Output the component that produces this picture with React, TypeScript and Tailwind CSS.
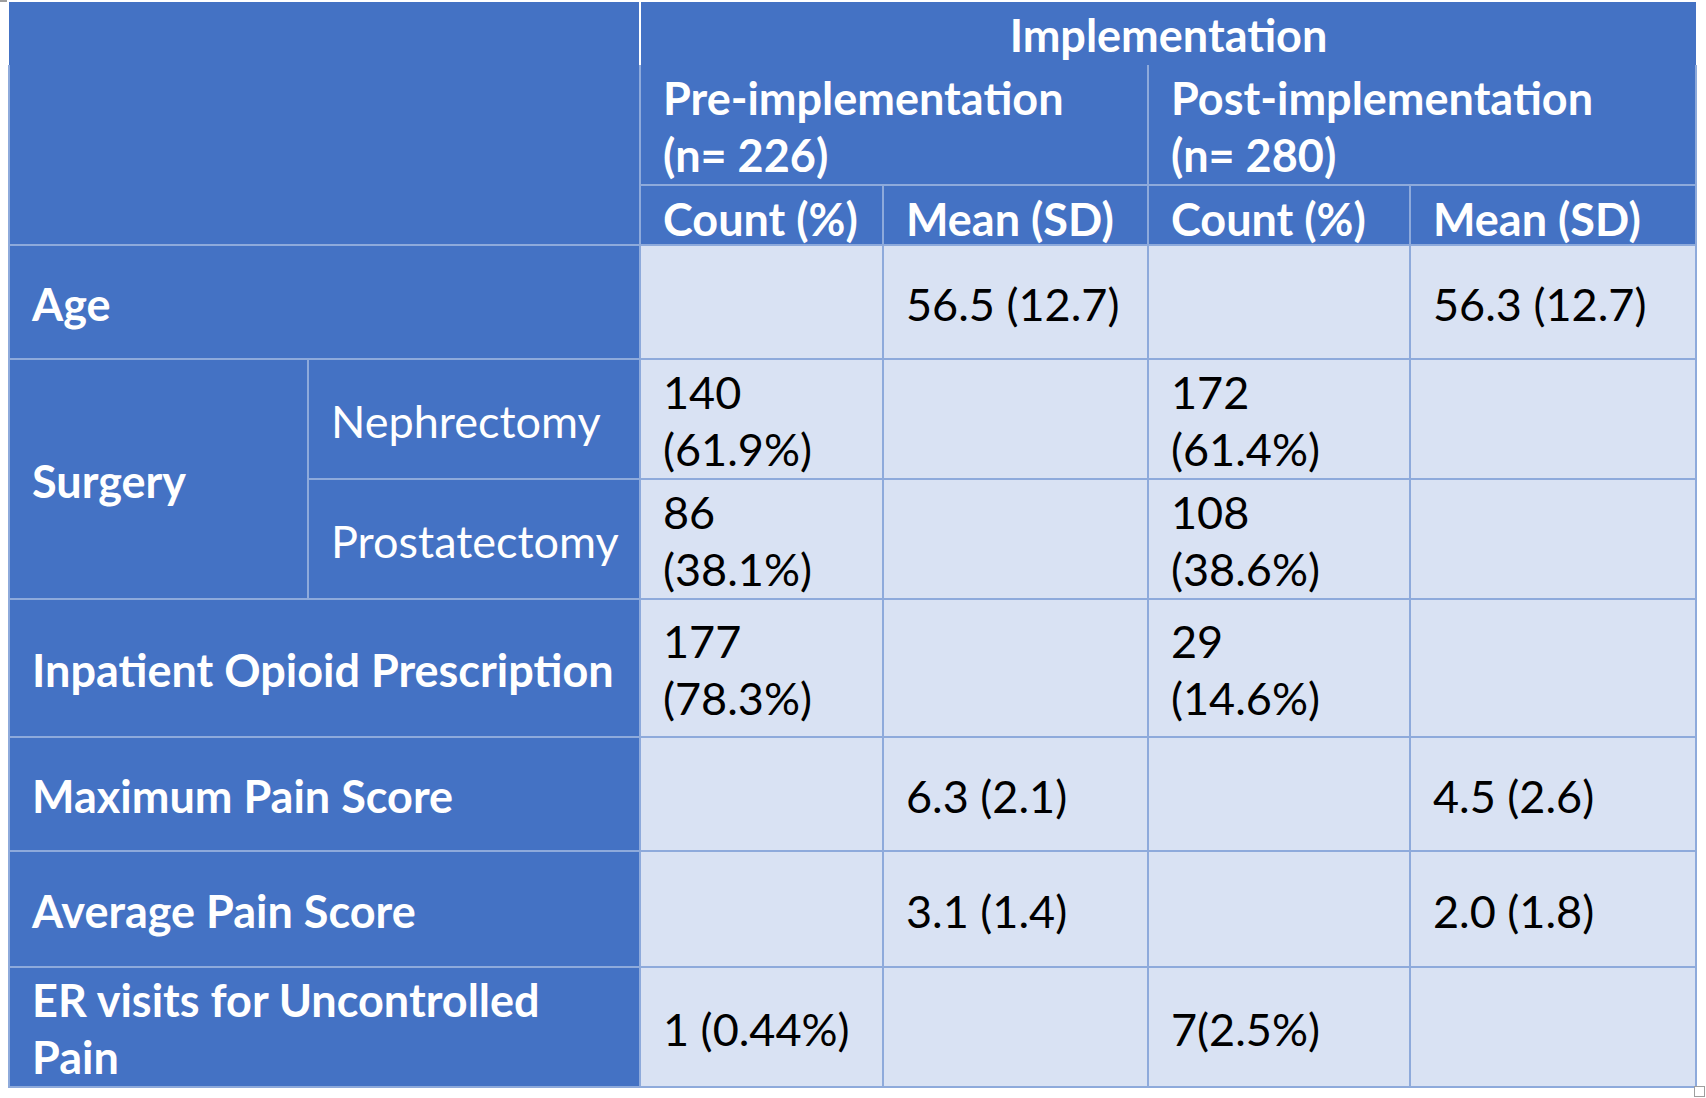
import React from "react";

const line = "border-2 border-[#8eaadb]";
const head = "bg-[#4472c4] text-white font-bold";
const label = "bg-[#4472c4] text-white font-bold";
const data = "bg-[#d9e2f3] text-black";
const pad = "px-[22px] pt-[4px] pb-0 align-middle";
const sub = "px-[22px] pt-[8px] pb-0 leading-[48px] align-middle whitespace-nowrap";

const rows = [
  { name: "Maximum Pain Score", h: "h-[114px]", c1: "", m1: "6.3 (2.1)", c2: "", m2: "4.5 (2.6)" },
  { name: "Average Pain Score", h: "h-[116px]", c1: "", m1: "3.1 (1.4)", c2: "", m2: "2.0 (1.8)" },
];

const Data = ({ children }: { children?: React.ReactNode }) => (
  <td className={`${line} ${data} ${pad}`}>{children}</td>
);

export default function App() {
  return (
    <div className="relative bg-white w-[1706px] h-[1098px] pl-[8px] pt-[2px] text-[45px] leading-[57px] font-['Lato','Noto_Sans',sans-serif]">
      <div className="absolute left-0 top-0 w-[7px] h-[2px] bg-[#9e9e9e]" />
      <table className="table-fixed border-collapse w-[1687px]">
        <colgroup>
          <col className="w-[299px]" />
          <col className="w-[332px]" />
          <col className="w-[243px]" />
          <col className="w-[265px]" />
          <col className="w-[262px]" />
          <col className="w-[286px]" />
        </colgroup>
        <tbody>
          <tr className="h-[63px]">
            <td colSpan={2} className={`${head} border-0 border-r-2 border-r-white`} />
            <td colSpan={4} className={`${head} border-0 text-center align-middle pt-[4px]`}>
              Implementation
            </td>
          </tr>
          <tr className="h-[120px]">
            <td colSpan={2} rowSpan={2} className={`${head} border-0 border-l-2 border-l-[#8eaadb] border-r-2 border-r-[#8eaadb] border-b-2 border-b-[#8eaadb]`} />
            <td colSpan={2} className={`${head} ${line} border-t-0 ${pad}`}>
              Pre-implementation
              <br />
              (n= 226)
            </td>
            <td colSpan={2} className={`${head} ${line} border-t-0 ${pad}`}>
              Post-implementation
              <br />
              (n= 280)
            </td>
          </tr>
          <tr className="h-[60px]">
            <td className={`${head} ${line} ${sub}`}>Count (%)</td>
            <td className={`${head} ${line} ${sub}`}>Mean (SD)</td>
            <td className={`${head} ${line} ${sub}`}>Count (%)</td>
            <td className={`${head} ${line} ${sub}`}>Mean (SD)</td>
          </tr>
          <tr className="h-[114px]">
            <td colSpan={2} className={`${label} ${line} ${pad}`}>Age</td>
            <Data />
            <Data>56.5 (12.7)</Data>
            <Data />
            <Data>56.3 (12.7)</Data>
          </tr>
          <tr className="h-[120px]">
            <td rowSpan={2} className={`${label} ${line} ${pad}`}>Surgery</td>
            <td className={`${label} ${line} ${pad} font-normal`}>Nephrectomy</td>
            <Data>
              140
              <br />
              (61.9%)
            </Data>
            <Data />
            <Data>
              172
              <br />
              (61.4%)
            </Data>
            <Data />
          </tr>
          <tr className="h-[120px]">
            <td className={`${label} ${line} ${pad} font-normal`}>Prostatectomy</td>
            <Data>
              86
              <br />
              (38.1%)
            </Data>
            <Data />
            <Data>
              108
              <br />
              (38.6%)
            </Data>
            <Data />
          </tr>
          <tr className="h-[138px]">
            <td colSpan={2} className={`${label} ${line} ${pad} whitespace-nowrap`}>Inpatient Opioid Prescription</td>
            <Data>
              177
              <br />
              (78.3%)
            </Data>
            <Data />
            <Data>
              29
              <br />
              (14.6%)
            </Data>
            <Data />
          </tr>
          {rows.map((r) => (
            <tr key={r.name} className={r.h}>
              <td colSpan={2} className={`${label} ${line} ${pad}`}>{r.name}</td>
              <Data>{r.c1}</Data>
              <Data>{r.m1}</Data>
              <Data>{r.c2}</Data>
              <Data>{r.m2}</Data>
            </tr>
          ))}
          <tr className="h-[120px]">
            <td colSpan={2} className={`${label} ${line} ${pad}`}>
              ER visits for Uncontrolled
              <br />
              Pain
            </td>
            <Data>1 (0.44%)</Data>
            <Data />
            <Data>7(2.5%)</Data>
            <Data />
          </tr>
        </tbody>
      </table>
      <div className="absolute left-[1694px] top-[1086px] w-[11px] h-[11px] border border-[#9e9e9e] bg-white" />
    </div>
  );
}
